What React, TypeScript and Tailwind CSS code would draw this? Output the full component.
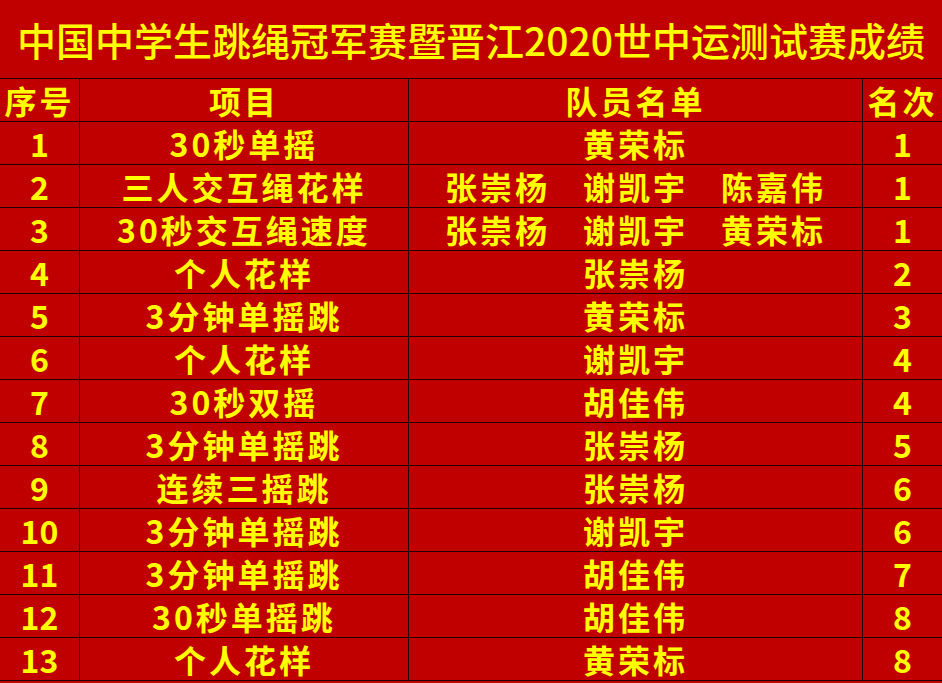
const rows: [string, string, string[], string][] = [
  ["1", "30秒单摇", ["黄荣标"], "1"],
  ["2", "三人交互绳花样", ["张崇杨", "谢凯宇", "陈嘉伟"], "1"],
  ["3", "30秒交互绳速度", ["张崇杨", "谢凯宇", "黄荣标"], "1"],
  ["4", "个人花样", ["张崇杨"], "2"],
  ["5", "3分钟单摇跳", ["黄荣标"], "3"],
  ["6", "个人花样", ["谢凯宇"], "4"],
  ["7", "30秒双摇", ["胡佳伟"], "4"],
  ["8", "3分钟单摇跳", ["张崇杨"], "5"],
  ["9", "连续三摇跳", ["张崇杨"], "6"],
  ["10", "3分钟单摇跳", ["谢凯宇"], "6"],
  ["11", "3分钟单摇跳", ["胡佳伟"], "7"],
  ["12", "30秒单摇跳", ["胡佳伟"], "8"],
  ["13", "个人花样", ["黄荣标"], "8"],
];

const cell = "h-[43px] flex items-center justify-center border-b border-[#200000]";

export default function App() {
  return (
    <div
      className="w-[942px] h-[683px] overflow-hidden bg-[#c00000] text-[#ffff00]"
      style={{ fontFamily: '"Noto Sans CJK SC", "Liberation Sans", sans-serif' }}
    >
      <div className="h-[79px] flex items-center justify-center text-[39px] font-medium border-b border-[#200000]">
        中国中学生跳绳冠军赛暨晋江2020世中运测试赛成绩
      </div>
      <div className="grid grid-cols-[80px_329px_454px_79px] text-[32px] font-semibold leading-none tracking-[3px]">
        <div className={`${cell} border-r`}>序号</div>
        <div className={`${cell} border-r`}>项目</div>
        <div className={`${cell} border-r`}>队员名单</div>
        <div className={cell}>名次</div>
        {rows.map(([no, item, names, rank]) => (
          <div key={no} className="contents">
            <div className={`${cell} border-r tracking-[0px]`}>{no}</div>
            <div className={`${cell} border-r`}>{item}</div>
            <div className={`${cell} border-r gap-[33px]`}>
              {names.map((n) => (
                <span key={n}>{n}</span>
              ))}
            </div>
            <div className={`${cell} tracking-[0px]`}>{rank}</div>
          </div>
        ))}
      </div>
    </div>
  );
}
